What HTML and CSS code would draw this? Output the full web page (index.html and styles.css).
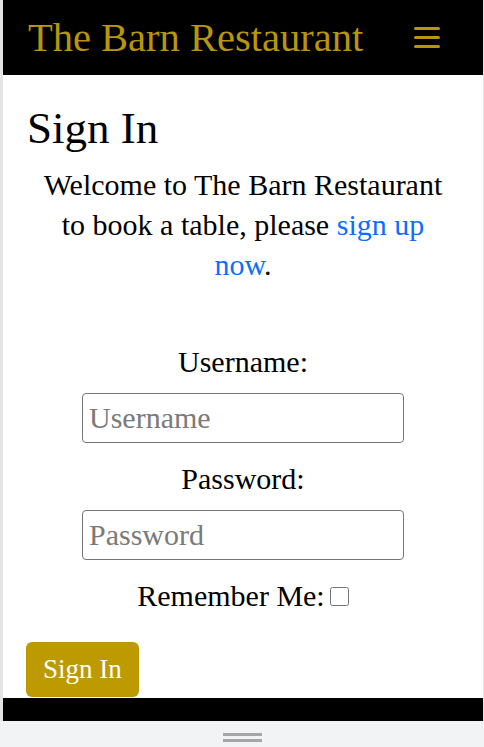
FILE: index.html
```html
<!DOCTYPE html>
<html lang="en">
<head>
<meta charset="utf-8">
<title>Sign In - The Barn Restaurant</title>
<link rel="stylesheet" href="styles.css">
</head>
<body>
<div class="frame">
  <header class="navbar">
    <a class="brand" href="#">The Barn Restaurant</a>
    <button class="toggler" type="button" aria-label="Toggle navigation">
      <span class="bar"></span><span class="bar"></span><span class="bar"></span>
    </button>
  </header>
  <main class="content">
    <h1 class="title">Sign In</h1>
    <p class="intro">Welcome to The Barn Restaurant to book a table, please <a class="link" href="#">sign up now</a>.</p>
    <form class="login-form">
      <label class="field-label" for="username">Username:</label>
      <input class="field-input" id="username" type="text" placeholder="Username">
      <label class="field-label" for="password">Password:</label>
      <input class="field-input" id="password" type="password" placeholder="Password">
      <div class="remember"><label for="remember">Remember Me:</label><input class="check" id="remember" type="checkbox"></div>
      <button class="submit" type="submit">Sign In</button>
    </form>
  </main>
  <footer class="footer"></footer>
</div>
<div class="dock"><span class="handle"></span></div>
</body>
</html>
```
FILE: styles.css
```css
* { box-sizing: border-box; }
html, body { margin: 0; padding: 0; }
body {
  width: 484px;
  height: 747px;
  overflow: hidden;
  background: #f1f3f4;
  font-family: "Liberation Serif", "Times New Roman", serif;
  color: #000;
}
.frame {
  height: 721px;
  display: flex;
  flex-direction: column;
  background: #fff;
  border-left: 3px solid #e4e4e4;
  border-right: 1px solid #e4e4e4;
}
.navbar {
  height: 75px;
  flex: none;
  background: #000;
  display: flex;
  align-items: center;
  justify-content: space-between;
  padding: 0 43px 0 25px;
}
.brand {
  color: #b8960b;
  text-decoration: none;
  font-size: 40.5px;
  line-height: 48px;
}
.toggler {
  background: none;
  border: 0;
  padding: 0;
  width: 26px;
  display: flex;
  flex-direction: column;
  gap: 6px;
}
.bar {
  display: block;
  width: 26px;
  height: 3px;
  border-radius: 2px;
  background: #b8960b;
}
.content {
  flex: 1;
  overflow: hidden;
  padding: 26px 24px 0;
}
.title {
  margin: 0;
  font-size: 45px;
  font-weight: normal;
  line-height: 54px;
}
.intro {
  margin: 10px 0 0;
  padding: 0 12px;
  text-align: center;
  font-size: 30px;
  line-height: 40px;
}
.link { color: #0d6efd; text-decoration: none; }
.login-form {
  margin-top: 57px;
  display: flex;
  flex-direction: column;
  align-items: center;
  font-size: 30px;
  line-height: 40px;
}
.field-label { display: block; }
.field-input {
  width: 322px;
  height: 50px;
  margin: 11px 0 16px;
  padding: 0 6px;
  border: 1px solid #767676;
  border-radius: 4px;
  font-family: inherit;
  font-size: 30px;
  color: #000;
}
.field-input::placeholder { color: #7a7a7a; }
.remember { display: flex; align-items: baseline; }
.check {
  width: 19px;
  height: 19px;
  margin: 0 0 0 5px;
}
.submit {
  align-self: flex-start;
  margin: 26px 0 0 -1px;
  height: 55px;
  padding: 0 17px;
  border: 0;
  border-radius: 6px;
  background: #bd9a00;
  color: #fff;
  font-family: inherit;
  font-size: 27px;
}
.footer {
  height: 23px;
  flex: none;
  background: #000;
}
.dock {
  height: 26px;
  display: flex;
  justify-content: center;
  padding-top: 12px;
}
.handle {
  width: 39px;
  height: 9px;
  border-top: 3px solid #a6a6a6;
  border-bottom: 3px solid #a6a6a6;
}
```
